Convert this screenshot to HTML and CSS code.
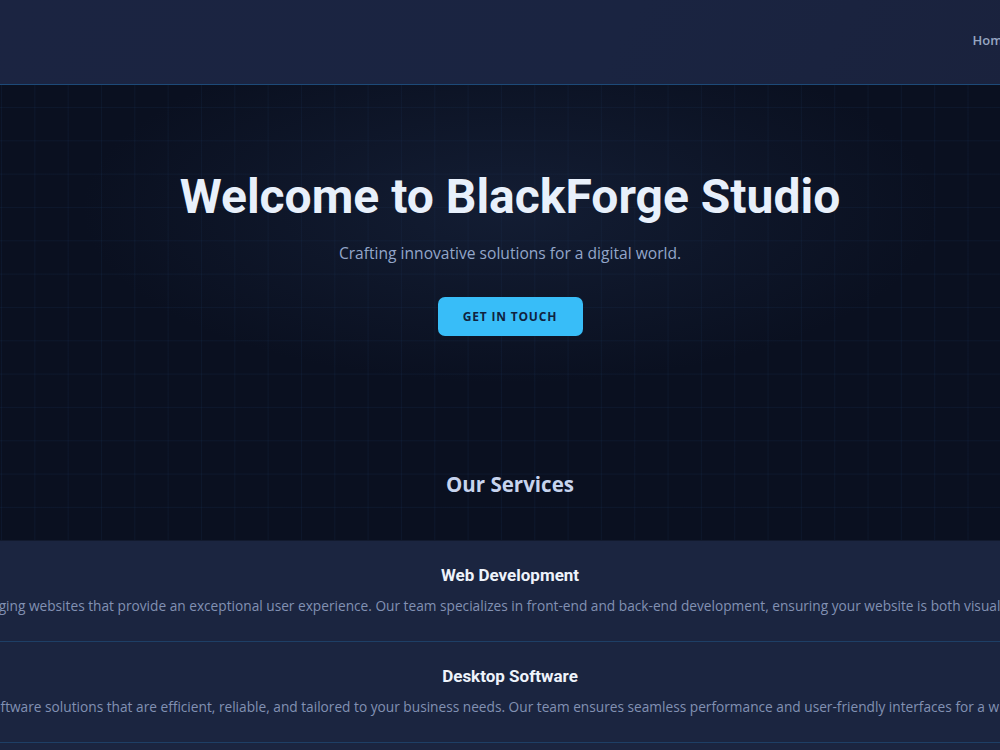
FILE: index.html
```html
<!DOCTYPE html>
<html>
<head>
  <title>BlackForge Studio</title>
  <link rel="stylesheet" href="styles.css">
</head>
<body>
  <header class="site-header">
    <div class="brand"></div>
    <nav class="nav">
      <a href="#">Home</a>
      <a href="#services">Services</a>
      <a href="#contact">Contact</a>
    </nav>
  </header>

  <section class="hero">
    <h1>Welcome to BlackForge Studio</h1>
    <p class="tagline">Crafting innovative solutions for a digital world.</p>
    <a class="btn" href="#contact">Get in Touch</a>
  </section>

  <section class="services" id="services">
    <h2>Our Services</h2>
  </section>

  <div class="service-list">
    <div class="service">
      <h3>Web Development</h3>
      <p>We design and build modern, responsive, engaging websites that provide an exceptional user experience. Our team specializes in front-end and back-end development, ensuring your website is both visually appealing and highly functional on every device.</p>
    </div>
    <div class="service">
      <h3>Desktop Software</h3>
      <p>We build custom desktop software solutions that are efficient, reliable, and tailored to your business needs. Our team ensures seamless performance and user-friendly interfaces for a wide range of operating systems.</p>
    </div>
    <div class="service">
      <h3>Game Development</h3>
      <p>We bring ideas to life with immersive games built for every platform.</p>
    </div>
  </div>
</body>
</html>
```

FILE: styles.css
```css
body {
  margin: 0;
  min-width: 1020px;
  overflow-x: hidden;
  background-color: #0a1020;
  background-image:
    linear-gradient(rgba(56, 120, 200, 0.07) 1px, transparent 1px),
    linear-gradient(90deg, rgba(56, 120, 200, 0.07) 1px, transparent 1px);
  background-size: 33.33px 33.33px;
  background-position: 1px 7px;
  font-family: "Open Sans", "Noto Sans", sans-serif;
  color: #8e9dbd;
}

/* header */
.site-header {
  height: 84px;
  display: flex;
  align-items: center;
  justify-content: flex-end;
  background: linear-gradient(120deg, #1b2441, #1a2441 60%, #1a223d);
  border-bottom: 1px solid #1d4a78;
  overflow: hidden;
}

.nav {
  display: flex;
  gap: 28px;
  margin-right: -146px;
  margin-top: -4px;
  white-space: nowrap;
}

.nav a {
  color: #97a6c2;
  text-decoration: none;
  font-size: 13px;
  font-weight: 600;
}

/* hero */
.hero {
  height: 355px;
  display: flex;
  flex-direction: column;
  align-items: center;
  text-align: center;
  background: radial-gradient(ellipse 60% 70% at 50% 35%, rgba(30, 45, 75, 0.45), rgba(10, 16, 32, 0) 70%);
}

.hero h1 {
  margin: 84px 0 0;
  font-family: Roboto, sans-serif;
  font-size: 48px;
  font-weight: 700;
  line-height: 56px;
  color: #e8f0fb;
}

.tagline {
  margin: 17px 0 0;
  font-size: 15.6px;
  color: #93a6c9;
}

.btn {
  margin-top: 33px;
  width: 145px;
  height: 39px;
  line-height: 39px;
  border-radius: 7px;
  background: #38bdf8;
  color: #10223d;
  text-decoration: none;
  text-transform: uppercase;
  font-size: 12px;
  font-weight: 700;
  letter-spacing: 0.8px;
}

/* services */
.services {
  height: 100px;
  display: flex;
  justify-content: center;
}

.services h2 {
  margin: 30px 0 0;
  font-size: 20.5px;
  font-weight: 700;
  color: #c7d4ee;
}

.service-list {
  background: #1b2540;
  border-top: 1px solid #121a2e;
}

.service {
  height: 100px;
  display: flex;
  flex-direction: column;
  align-items: center;
  border-bottom: 1px solid #1e3f66;
}

.service h3 {
  margin: 24px 0 0;
  font-family: Roboto, sans-serif;
  font-size: 17px;
  font-weight: 700;
  color: #eef3fb;
}

.service p {
  margin: 11px 0 0;
  white-space: nowrap;
  font-size: 13.7px;
  color: #8291b3;
}
```
